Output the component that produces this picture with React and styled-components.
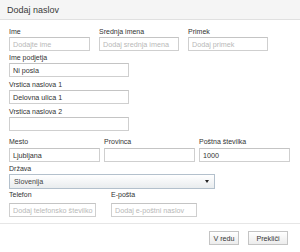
import React from 'react';
import styled, { createGlobalStyle } from 'styled-components';

const Global = createGlobalStyle`
  html, body {
    margin: 0;
    padding: 0;
    background: #ffffff;
  }
  body {
    font-family: "Liberation Sans", Arial, sans-serif;
  }
`;

const Dialog = styled.div`
  width: 300px;
  height: 252px;
  background: #fff;
  display: flex;
  flex-direction: column;
  color: #333;
`;

const Header = styled.div`
  height: 19px;
  background: #f5f5f5;
  border-bottom: 1px solid #e0e0e0;
  display: flex;
  align-items: center;
  padding-left: 7px;
  font-size: 9px;
  color: #3a3a3a;
`;

const Body = styled.div`
  padding: 7px 0 0 9px;
  display: flex;
  flex-direction: column;
`;

const Row = styled.div`
  display: flex;
  gap: ${p => p.gap || 0}px;
  margin-top: ${p => p.top || 0}px;
`;

const Field = styled.div`
  display: flex;
  flex-direction: column;
  width: ${p => p.w}px;
`;

const Label = styled.div`
  font-size: 7px;
  line-height: 10px;
  height: 10px;
  color: #333;
  white-space: nowrap;
  margin-bottom: ${p => p.mb || 0}px;
`;

const Input = styled.input`
  box-sizing: border-box;
  width: ${p => p.w}px;
  height: 14px;
  border: 1px solid #cfcfcf;
  border-top-color: #c4c4c4;
  padding: 0 2px 0 3px;
  margin: 0;
  font-family: "Liberation Sans", Arial, sans-serif;
  font-size: 7.2px;
  color: #333;
  background: #fff;
  outline: none;
  &::placeholder {
    color: #b8b8b8;
  }
`;

const Select = styled.div`
  box-sizing: border-box;
  width: 206px;
  height: 15px;
  border: 1px solid #b3c0cc;
  background: linear-gradient(#ffffff, #e9ecee);
  display: flex;
  align-items: center;
  justify-content: space-between;
  padding: 0 5px 0 4px;
  font-size: 7.2px;
  color: #444;
`;

const Arrow = styled.span`
  width: 0;
  height: 0;
  border-left: 2.5px solid transparent;
  border-right: 2.5px solid transparent;
  border-top: 3px solid #222;
`;

const Footer = styled.div`
  margin-top: 6px;
  border-top: 1px solid #e6e6e6;
  display: flex;
  justify-content: flex-end;
  gap: 9px;
  padding: 7px 12px 0 0;
`;

const Button = styled.button`
  box-sizing: border-box;
  height: 14px;
  width: ${p => p.w}px;
  border: 1px solid #c4c4c4;
  background: linear-gradient(#ffffff, #ececec);
  font-family: "Liberation Sans", Arial, sans-serif;
  font-size: 7.2px;
  color: #333;
  padding: 0;
`;

export default function App() {
  return (
    <Dialog>
      <Global />
      <Header>Dodaj naslov</Header>
      <Body>
        <Row gap={9}>
          <Field w={81}>
            <Label>Ime</Label>
            <Input w={81} placeholder="Dodajte ime" />
          </Field>
          <Field w={80}>
            <Label>Srednja imena</Label>
            <Input w={80} placeholder="Dodaj srednja imena" />
          </Field>
          <Field w={80}>
            <Label>Primek</Label>
            <Input w={80} placeholder="Dodaj primek" />
          </Field>
        </Row>
        <Row top={2}>
          <Field w={120}>
            <Label>Ime podjetja</Label>
            <Input w={120} defaultValue="Ni posla" />
          </Field>
        </Row>
        <Row top={3}>
          <Field w={120}>
            <Label>Vrstica naslova 1</Label>
            <Input w={120} defaultValue="Delovna ulica 1" />
          </Field>
        </Row>
        <Row top={3}>
          <Field w={120}>
            <Label>Vrstica naslova 2</Label>
            <Input w={120} />
          </Field>
        </Row>
        <Row top={6} gap={4}>
          <Field w={91}>
            <Label mb={1}>Mesto</Label>
            <Input w={91} defaultValue="Ljubljana" />
          </Field>
          <Field w={91}>
            <Label mb={1}>Provinca</Label>
            <Input w={91} />
          </Field>
          <Field w={91}>
            <Label mb={1}>Poštna številka</Label>
            <Input w={91} defaultValue="1000" />
          </Field>
        </Row>
        <Row top={2}>
          <Field w={206}>
            <Label>Država</Label>
            <Select>
              <span>Slovenija</span>
              <Arrow />
            </Select>
          </Field>
        </Row>
        <Row top={1} gap={15}>
          <Field w={87}>
            <Label mb={3}>Telefon</Label>
            <Input w={87} placeholder="Dodaj telefonsko številko" />
          </Field>
          <Field w={86}>
            <Label mb={3}>E-pošta</Label>
            <Input w={86} placeholder="Dodaj e-poštni naslov" />
          </Field>
        </Row>
      </Body>
      <Footer>
        <Button w={30}>V redu</Button>
        <Button w={40}>Prekliči</Button>
      </Footer>
    </Dialog>
  );
}
